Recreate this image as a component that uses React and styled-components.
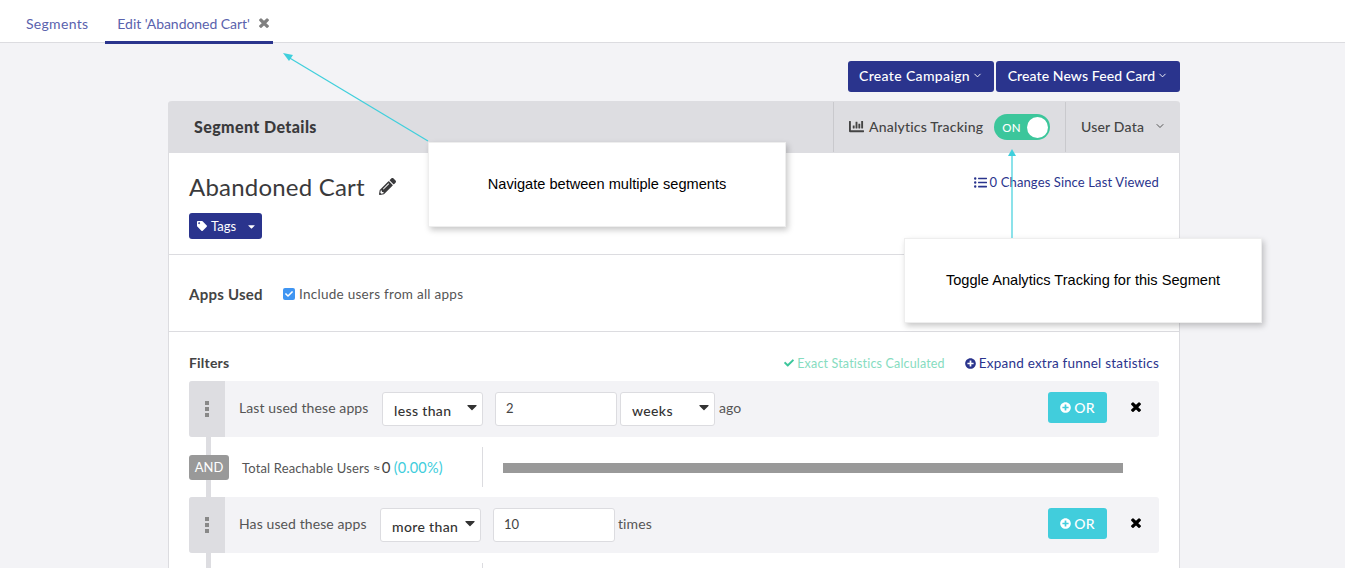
import React from 'react';
import styled, { createGlobalStyle } from 'styled-components';
import { FaPencilAlt, FaTag, FaCaretDown, FaListUl, FaChartBar, FaCheck, FaPlusCircle } from 'react-icons/fa';
import { FiChevronDown } from 'react-icons/fi';

const Global = createGlobalStyle`
  html, body {
    margin: 0;
    height: 100%;
    overflow: hidden;
    background: #f3f3f6;
    font-family: Lato, "Liberation Sans", sans-serif;
    color: #444;
  }
  * { box-sizing: border-box; }
`
const Page = styled.div`
  position: relative;
  height: 568px;
  overflow: hidden;
`
const TabBar = styled.div`
  display: flex;
  height: 43px;
  padding-left: 14px;
  background: #fff;
  border-bottom: 1px solid #dcdce0;
`
const Tab = styled.div`
  display: flex;
  align-items: center;
  gap: 8px;
  width: ${p => (p.$active ? '168px' : 'auto')};
  height: 44px;
  margin-right: ${p => (p.$active ? '0' : '5px')};
  padding: 5px 0 0 12px;
  padding-right: ${p => (p.$active ? '0' : '12px')};
  font-size: 14px;
  letter-spacing: ${p => (p.$active ? '-0.04px' : '0.3px')};
  white-space: nowrap;
  color: #5a62ad;
  border-bottom: 3px solid ${p => (p.$active ? '#2a348d' : 'transparent')};
  svg { flex-shrink: 0; color: #808080; }
`
const CrossSvg = styled.svg`
  width: 12px;
  height: 15px;
  fill: currentColor;
`
const Actions = styled.div`
  display: flex;
  justify-content: flex-end;
  gap: 2px;
  width: 1180px;
  padding-top: 18px;
  height: 58px;
`
const ActionButton = styled.div`
  display: flex;
  align-items: center;
  justify-content: center;
  gap: 2px;
  width: ${p => p.$width}px;
  height: 31px;
  padding-bottom: 2px;
  border-radius: 3px;
  background: #2a348d;
  color: #fff;
  font-size: 14px;
  font-weight: 500;
  letter-spacing: ${p => p.$track}px;
  svg { font-size: 11px; }
`
const Card = styled.div`
  width: 1012px;
  margin-left: 168px;
  background: #fff;
  border: solid #dcdce0;
  border-width: 0 1px;
  border-radius: 4px 4px 0 0;
  height: 600px;
`
const CardHeader = styled.div`
  display: flex;
  align-items: stretch;
  height: 52px;
  margin: 0 -1px;
  background: #dddde1;
  border-radius: 4px 4px 0 0;
`
const CardTitle = styled.div`
  flex: 1;
  display: flex;
  align-items: center;
  padding: 0 0 2px 26px;
  font-size: 16px;
  font-weight: 900;
  letter-spacing: 0.4px;
  color: #3a3a3c;
`
const HeaderCell = styled.div`
  display: flex;
  align-items: center;
  width: ${p => p.$width}px;
  margin: 1px 0;
  padding: 0 0 2px ${p => p.$pad}px;
  border-left: 1px solid #c9c9cd;
  font-size: 14px;
  font-weight: 500;
  letter-spacing: 0.2px;
  color: #444;
`
const BarIcon = styled(FaChartBar)`
  font-size: 15px;
  margin-right: 5px;
`
const Toggle = styled.div`
  display: flex;
  align-items: center;
  justify-content: space-between;
  width: 56px;
  height: 26px;
  margin: 2px 0 0 11px;
  padding: 0 2px 0 8px;
  border-radius: 13px;
  background: #3cc69b;
  color: #fff;
  font-size: 11.5px;
  letter-spacing: 0.3px;
`
const Knob = styled.span`
  width: 21px;
  height: 21px;
  border-radius: 50%;
  background: #fff;
`
const DataChevron = styled(FiChevronDown)`
  font-size: 12px;
  margin-left: 10px;
  color: #555;
`
const TitleSection = styled.div`
  height: 102px;
  padding: 18px 20px 0;
  border-bottom: 1px solid #dcdce0;
`
const TitleRow = styled.div`
  display: flex;
  align-items: center;
  height: 30px;
`
const Name = styled.h1`
  margin: 0;
  font-size: 24px;
  font-weight: 400;
  letter-spacing: 0.2px;
  color: #3a3a3c;
`
const Pencil = styled(FaPencilAlt)`
  margin-left: 14px;
  font-size: 17px;
  color: #3a3a3c;
`
const ChangesLink = styled.div`
  display: flex;
  align-items: center;
  gap: 3px;
  margin: -8px 0 0 auto;
  font-size: 13px;
  letter-spacing: 0.13px;
  color: #2a348d;
  svg { font-size: 13px; }
`
const TagsButton = styled.div`
  display: flex;
  align-items: center;
  width: 73px;
  height: 26px;
  margin-top: 12px;
  padding-left: 8px;
  border-radius: 3px;
  background: #2a348d;
  color: #fff;
  font-size: 13px;
  svg:first-child { font-size: 10px; margin-right: 4px; }
  svg:last-child { font-size: 11px; margin-left: 10px; }
`
const AppsSection = styled.div`
  display: flex;
  align-items: center;
  height: 77px;
  padding: 2px 20px 0;
  border-bottom: 1px solid #dcdce0;
`
const AppsLabel = styled.div`
  width: 94px;
  font-size: 15px;
  font-weight: 700;
  letter-spacing: 0.25px;
  color: #444;
`
const CheckBox = styled.span`
  display: flex;
  align-items: center;
  justify-content: center;
  width: 12px;
  height: 12px;
  margin-right: 4px;
  border-radius: 2px;
  background: #3f95f2;
  color: #fff;
  font-size: 8px;
`
const AppsText = styled.span`
  font-size: 13.5px;
  letter-spacing: 0.27px;
  color: #555;
`
const Filters = styled.div`
  padding: 0 20px;
`
const FiltersHead = styled.div`
  display: flex;
  align-items: center;
  height: 49px;
  padding: 13px 0 0;
`
const FiltersLabel = styled.div`
  margin: -2px auto 0 0;
  font-size: 14px;
  font-weight: 700;
  letter-spacing: 0.2px;
  color: #444;
`
const Exact = styled.div`
  display: flex;
  align-items: center;
  gap: 3px;
  font-size: 12.5px;
  letter-spacing: 0.17px;
  color: #86dcc0;
  svg { color: #3cc69b; font-size: 10px; }
`
const Expand = styled.div`
  display: flex;
  align-items: center;
  gap: 3px;
  margin-left: 20px;
  font-size: 13.5px;
  letter-spacing: 0.22px;
  color: #2a348d;
  svg { font-size: 11px; }
`
const Row = styled.div`
  display: flex;
  align-items: center;
  height: 56px;
  border-radius: 3px;
  background: #f3f3f6;
  font-size: 14px;
  letter-spacing: 0.1px;
  color: #555;
`
const Handle = styled.div`
  display: flex;
  flex-direction: column;
  align-items: center;
  justify-content: center;
  gap: 2px;
  align-self: stretch;
  width: 36px;
  margin-right: 14px;
  padding-right: 1px;
  border-radius: 3px 0 0 3px;
  background: #dddde1;
  i { width: 4px; height: 4px; background: #888; }
`
const RowLabel = styled.div`
  width: ${p => p.$width}px;
  margin-top: -3px;
`
const SelectBox = styled.div`
  display: flex;
  align-items: center;
  justify-content: space-between;
  width: ${p => p.$width}px;
  height: 34px;
  padding: 3px 2px 0 11px;
  border: 1px solid #dcdce0;
  border-radius: 3px;
  background: #fff;
  font-size: 14px;
  font-weight: 500;
  letter-spacing: 0.35px;
  color: #333;
  svg { font-size: 16px; margin-top: -7px; }
`
const InputBox = styled.input`
  width: 122px;
  height: 34px;
  margin: 0 ${p => p.$after}px 0 12px;
  padding: 0 10px 2px;
  border: 1px solid #dcdce0;
  border-radius: 3px;
  background: #fff;
  font: 13px Lato, "Liberation Sans", sans-serif;
  color: #444;
`
const Unit = styled.div`
  margin: -3px 0 0 4px;
  font-size: 14px;
`
const OrButton = styled.div`
  display: flex;
  align-items: center;
  justify-content: center;
  gap: 3px;
  width: 59px;
  height: 31px;
  margin: -3px 0 0 auto;
  padding-bottom: 1px;
  border-radius: 3px;
  background: #41cddc;
  color: #fff;
  font-size: 14px;
  font-weight: 500;
  svg { font-size: 11px; }
`
const RemoveSlot = styled.div`
  display: flex;
  margin: -3px 17px 0 23px;
  color: #000;
`
const Stats = styled.div`
  position: relative;
  display: flex;
  align-items: center;
  height: 60px;
`
const Connector = styled.div`
  position: absolute;
  top: 0;
  bottom: 0;
  left: 17px;
  width: 5px;
  background: #dddde1;
`
const AndBadge = styled.div`
  position: relative;
  display: flex;
  align-items: center;
  justify-content: center;
  width: 40px;
  height: 25px;
  border-radius: 3px;
  background: #999;
  color: #fff;
  font-size: 13px;
`
const Total = styled.div`
  display: flex;
  align-items: baseline;
  width: 240px;
  margin-left: 13px;
  font-size: 13px;
  letter-spacing: 0.15px;
  color: #555;
`
const TotalCount = styled.span`
  margin-left: 1px;
  font-size: 15px;
  color: #444;
`
const TotalPct = styled.span`
  margin-left: 3px;
  font-size: 14.5px;
  color: #41cddc;
`
const StatsDivider = styled.div`
  width: 1px;
  height: 40px;
  margin-left: ${p => p.$offset || 0}px;
  background: #dcdce0;
`
const Bar = styled.div`
  width: 620px;
  height: 10px;
  margin: 1px 0 0 20px;
  background: #999;
`
const Callout = styled.div`
  position: absolute;
  left: ${p => p.$left}px;
  top: ${p => p.$top}px;
  display: flex;
  align-items: center;
  justify-content: center;
  width: 358px;
  height: 85px;
  padding-bottom: 1px;
  background: #fff;
  border: 1px solid #eee;
  box-shadow: 2px 3px 6px rgba(0, 0, 0, 0.22);
  font: 14.6px "Liberation Sans", Arial, sans-serif;
  color: #000;
`
const Arrows = styled.svg`
  position: absolute;
  left: 0;
  top: 0;
  pointer-events: none;
`

// chunky rounded cross, the newer FaTimes is too thin for this
const Cross = () => (
  <CrossSvg viewBox="0 0 1408 1792">
    <path d="M1298 1214q0 40-28 68l-136 136q-28 28-68 28t-68-28l-294-294-294 294q-28 28-68 28t-68-28l-136-136q-28-28-28-68t28-68l294-294-294-294q-28-28-28-68t28-68l136-136q28-28 68-28t68 28l294 294 294-294q28-28 68-28t68 28l136 136q28 28 28 68t-28 68l-294 294 294 294q28 28 28 68z" />
  </CrossSvg>
);

const FilterRow = ({ label, labelWidth, op, opWidth, value, after, children }) => (
  <Row>
    <Handle><i /><i /><i /></Handle>
    <RowLabel $width={labelWidth}>{label}</RowLabel>
    <SelectBox $width={opWidth}>{op}<FaCaretDown /></SelectBox>
    <InputBox readOnly value={value} $after={after} />
    {children}
    <OrButton><FaPlusCircle />OR</OrButton>
    <RemoveSlot><Cross /></RemoveSlot>
  </Row>
);

const App = () => (
  <Page>
    <Global />
    <TabBar>
      <Tab>Segments</Tab>
      <Tab $active>Edit 'Abandoned Cart'<Cross /></Tab>
    </TabBar>
    <Actions>
      <ActionButton $width={146} $track={0.35}>Create Campaign<FiChevronDown /></ActionButton>
      <ActionButton $width={184} $track={0.1}>Create News Feed Card<FiChevronDown /></ActionButton>
    </Actions>
    <Card>
      <CardHeader>
        <CardTitle>Segment Details</CardTitle>
        <HeaderCell $width={232} $pad={15}>
          <BarIcon />Analytics Tracking
          <Toggle>ON<Knob /></Toggle>
        </HeaderCell>
        <HeaderCell $width={115} $pad={15}>
          User Data<DataChevron />
        </HeaderCell>
      </CardHeader>
      <TitleSection>
        <TitleRow>
          <Name>Abandoned Cart</Name>
          <Pencil />
          <ChangesLink><FaListUl />0 Changes Since Last Viewed</ChangesLink>
        </TitleRow>
        <TagsButton><FaTag />Tags<FaCaretDown /></TagsButton>
      </TitleSection>
      <AppsSection>
        <AppsLabel>Apps Used</AppsLabel>
        <CheckBox><FaCheck /></CheckBox>
        <AppsText>Include users from all apps</AppsText>
      </AppsSection>
      <Filters>
        <FiltersHead>
          <FiltersLabel>Filters</FiltersLabel>
          <Exact><FaCheck />Exact Statistics Calculated</Exact>
          <Expand><FaPlusCircle />Expand extra funnel statistics</Expand>
        </FiltersHead>
        <FilterRow label="Last used these apps" labelWidth={143} op="less than" opWidth={101} value="2" after={3}>
          <SelectBox $width={95}>weeks<FaCaretDown /></SelectBox>
          <Unit>ago</Unit>
        </FilterRow>
        <Stats>
          <Connector />
          <AndBadge>AND</AndBadge>
          <Total>
            Total Reachable Users ≈<TotalCount>0</TotalCount><TotalPct>(0.00%)</TotalPct>
          </Total>
          <StatsDivider />
          <Bar />
        </Stats>
        <FilterRow label="Has used these apps" labelWidth={141} op="more than" opWidth={101} value="10" after={-1}>
          <Unit>times</Unit>
        </FilterRow>
        <Stats>
          <Connector />
          <StatsDivider $offset={293} />
        </Stats>
      </Filters>
    </Card>
    <Callout $left={428} $top={142}>Navigate between multiple segments</Callout>
    <Callout $left={904} $top={238}>Toggle Analytics Tracking for this Segment</Callout>
    <Arrows width="1345" height="568" fill="#3fcfdc" stroke="#3fcfdc">
      <line x1="428" y1="141" x2="288" y2="57" strokeWidth="1.2" />
      <polygon points="283,53 293,55 289,61" stroke="none" />
      <line x1="1012" y1="238" x2="1012" y2="155" strokeWidth="1.2" />
      <polygon points="1012,149 1016,156 1008,156" stroke="none" />
    </Arrows>
  </Page>
);

export default App;
